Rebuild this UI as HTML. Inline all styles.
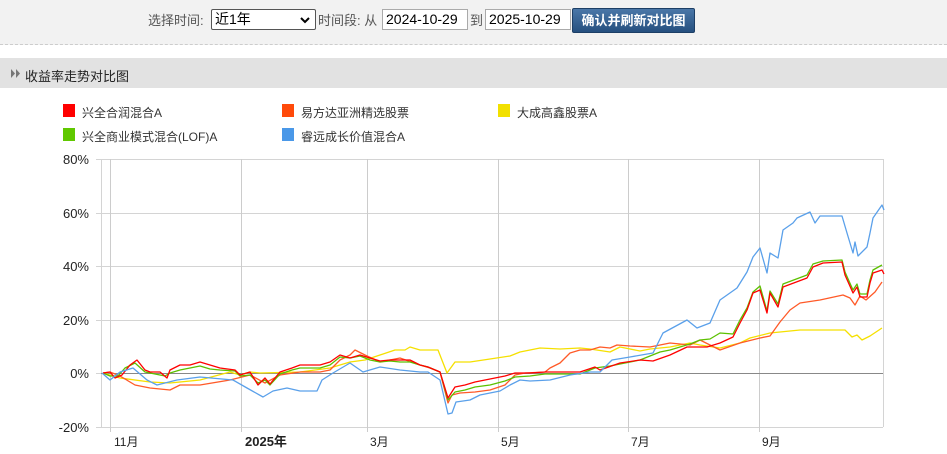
<!DOCTYPE html>
<html><head><meta charset="utf-8"><style>
body{margin:0;width:947px;height:454px;background:#fff;font-family:"Liberation Sans","Noto Sans CJK SC",sans-serif;font-size:12px;color:#333;position:relative;overflow:hidden}
.top{position:absolute;left:0;top:0;width:947px;height:44px;background:#f2f2f2;border-bottom:1px dashed #ccc}
.a{position:absolute;white-space:nowrap}
.inp{position:absolute;height:19px;border:1px solid #aaa;background:#fff;font-size:14px;color:#000;line-height:19px;padding-left:3px;box-sizing:content-box}
.hdr{position:absolute;left:0;top:58px;width:947px;height:30px;background:#e2e2e2}
.sq{position:absolute;width:12px;height:13px}
</style></head><body>
<div class="top"></div>
<div class="a" style="left:148px;top:10px;font-size:13px;color:#555">选择时间:</div>
<div class="inp" style="left:211px;top:9px;width:100px;border-color:#555;border-radius:2px">近1年<svg style="position:absolute;right:5px;top:6px" width="10" height="8"><path d="M1 2L5 6L9 2" stroke="#000" stroke-width="2" fill="none"/></svg></div>
<div class="a" style="left:318px;top:10px;font-size:13px;color:#555">时间段: 从</div>
<div class="inp" style="left:382px;top:9px;width:81px">2024-10-29</div>
<div class="a" style="left:470px;top:10px;font-size:13px;color:#555">到</div>
<div class="inp" style="left:485px;top:9px;width:81px">2025-10-29</div>
<div class="a" style="left:572px;top:8px;width:121px;height:23px;background:linear-gradient(#4a77a8,#26507f);border:1px solid #1d3f66;color:#fff;font-size:13px;font-weight:bold;text-align:center;line-height:23px;border-radius:2px">确认并刷新对比图</div>
<div class="hdr"></div>
<svg class="a" style="left:11px;top:69px" width="10" height="9"><path d="M0 0L4 4.5L0 9ZM5 0L9 4.5L5 9Z" fill="#777"/></svg>
<div class="a" style="left:25px;top:66px;font-size:13px;color:#222">收益率走势对比图</div>
<div class="sq" style="left:63px;top:104px;background:#f00"></div><div class="a" style="left:82px;top:104px">兴全合润混合A</div>
<div class="sq" style="left:282px;top:104px;background:#ff4a0a"></div><div class="a" style="left:301px;top:104px">易方达亚洲精选股票</div>
<div class="sq" style="left:498px;top:104px;background:#f2e000"></div><div class="a" style="left:517px;top:104px">大成高鑫股票A</div>
<div class="sq" style="left:63px;top:128px;background:#60c800"></div><div class="a" style="left:82px;top:128px">兴全商业模式混合(LOF)A</div>
<div class="sq" style="left:282px;top:128px;background:#4a98e8"></div><div class="a" style="left:301px;top:128px">睿远成长价值混合A</div>
<svg style="position:absolute;left:0;top:0" width="947" height="454">
<g font-family="'Liberation Sans','DejaVu Sans',sans-serif" font-size="13" fill="#222" text-anchor="end">
<text x="89" y="164">80%</text><text x="89" y="218">60%</text><text x="89" y="271">40%</text><text x="89" y="325">20%</text><text x="89" y="378">0%</text><text x="89" y="432">-20%</text></g>
<g stroke="#d4d4d4" stroke-width="1" fill="none">
<path d="M101 159.5H883M101 213.5H883M101 266.5H883M101 320.5H883M101 427.5H883M101.5 159V427M883.5 159V427"/>
<path d="M110.5 159V432M241.5 159V432M367.5 159V432M498.5 159V432M628.5 159V432M759.5 159V432" stroke="#ccc"/>
<path d="M96 159.5H101M96 213.5H101M96 266.5H101M96 320.5H101M96 373.5H101M96 427.5H101"/></g>
<path d="M101 373.5H883" stroke="#888"/>
<g font-family="'Liberation Sans','Noto Sans CJK SC',sans-serif" font-size="12" fill="#222">
<text x="114" y="446">11月</text><text x="245" y="446" font-weight="bold" font-size="13">2025年</text><text x="370" y="446">3月</text><text x="501" y="446">5月</text><text x="631" y="446">7月</text><text x="762" y="446">9月</text></g>
<g fill="none" stroke-width="1.3" stroke-linejoin="round">
<polyline stroke="#f5e000" points="103,373 120,378 150,382 170,383 200,380 230,372 240,375 250,372 260,373 300,372 330,368 350,362 365,360 380,355 395,350 405,350 410,347 420,350 438,350 447,373 455,362 470,362 490,359 510,356 520,352 540,348 560,349 580,348 590,349 610,352 620,347 640,351 650,349 670,347 690,343 700,345 720,348 740,343 750,338 770,333 800,330 845,330 852,337 857,335 862,340 870,336 882,328"/>
<polyline stroke="#ff5a28" points="103,373 110,372 120,376 135,385 150,388 170,390 180,385 200,385 230,380 250,375 265,383 280,375 300,372 320,372 330,370 340,360 350,355 355,350 365,355 380,362 400,358 420,365 430,368 440,372 448,403 452,395 460,393 475,392 490,390 505,385 515,375 525,373 545,372 550,368 560,363 570,353 580,350 590,350 600,347 610,348 617,345 630,346 650,347 670,343 690,345 700,340 720,350 740,343 760,338 770,336 780,322 790,310 800,303 820,300 843,295 850,298 855,305 860,296 866,300 875,292 882,282"/>
<polyline stroke="#5cc000" points="103,373 110,376 118,376 125,368 135,363 145,372 155,374 165,376 170,373 180,370 200,366 210,369 220,370 235,371 240,376 250,375 258,383 265,380 270,385 280,374 292,370 300,368 320,368 330,365 340,357 350,358 360,356 370,360 380,362 390,361 400,362 410,362 420,365 428,367 440,372 448,400 455,392 465,390 475,387 490,385 505,381 515,377 530,376 545,374 560,374 580,374 595,368 610,366 620,364 640,360 660,352 670,350 690,344 700,340 710,339 720,333 733,334 740,320 747,308 753,292 760,286 767,311 770,291 778,304 783,284 807,275 813,264 823,261 842,260 845,272 853,290 857,284 860,294 867,294 870,280 873,270 882,265"/>
<polyline stroke="#f00" points="103,373 110,372 115,378 122,375 130,365 137,360 145,370 150,372 160,372 167,378 170,370 180,365 190,365 200,362 210,365 220,368 235,370 240,375 250,372 258,385 265,378 270,384 275,378 280,372 292,368 300,365 320,365 330,362 340,355 350,358 360,355 370,358 380,361 390,360 400,360 410,360 420,365 428,367 440,372 448,398 455,387 465,385 475,382 490,379 505,376 515,373 530,373 545,372 560,372 580,372 595,367 600,370 620,363 640,360 653,361 670,355 687,347 707,347 720,343 733,337 740,323 747,310 753,293 760,290 767,313 770,293 778,307 783,287 807,278 813,267 823,263 842,262 845,275 853,293 857,287 860,297 867,297 870,283 873,273 882,270 884,274"/>
<polyline stroke="#5aa0ea" points="102,373 110,380 120,372 133,368 147,380 157,385 177,380 200,377 233,380 247,388 263,397 273,391 287,388 300,391 317,391 322,380 333,373 350,363 363,372 380,367 400,370 420,372 428,372 440,380 448,414 452,413 456,402 470,400 480,395 500,391 510,385 520,380 530,381 550,380 570,375 590,372 600,372 612,360 630,357 653,353 663,333 687,320 697,328 710,323 720,300 737,288 747,272 753,257 760,248 767,273 770,253 778,258 783,230 793,223 797,218 810,212 815,223 820,216 842,216 847,233 853,253 855,242 858,256 867,247 870,233 873,218 882,205 884,210"/>
</g></svg>
</body></html>
